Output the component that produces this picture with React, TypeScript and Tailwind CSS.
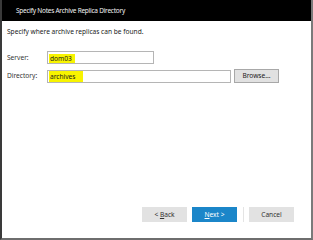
import React from "react";

const font = { fontFamily: '"Noto Sans", "Liberation Sans", sans-serif' };

const App = () => {
  return (
    <div
      className="w-[313px] h-[240px] bg-white flex flex-col border-l-2 border-l-[#3a3a3a] border-r-2 border-r-[#7a7a7a] border-b-2 border-b-[#6e6e6e] overflow-hidden"
      style={font}
    >
      <div className="h-[21px] bg-black text-[#f2f2f2] text-[6.5px] tracking-[-0.25px] leading-[21px] pl-[14px] shrink-0">
        Specify Notes Archive Replica Directory
      </div>
      <div className="flex-1 flex flex-col px-[5px] text-[6.6px] text-[#1a1a1a]">
        <div className="mt-[6px] leading-[10px]">Specify where archive replicas can be found.</div>

        <div className="flex items-center mt-[14px]">
          <span className="w-[40px] text-[#333]">Server:</span>
          <div className="w-[107px] h-[13px] border border-[#b5b5b5] flex items-center px-[1px]">
            <span className="bg-[#f8f400] pl-[1px] pr-[3px] leading-[9px] mt-[2px]">dom03</span>
          </div>
        </div>

        <div className="flex items-center mt-[5px]">
          <span className="w-[40px] text-[#333]">Directory:</span>
          <div className="w-[184px] h-[13px] border border-[#b5b5b5] flex items-center px-[1px]">
            <span className="bg-[#f8f400] pl-[1px] pr-[8px] leading-[11px]">archives</span>
          </div>
          <button className="ml-[3px] w-[45px] h-[14px] bg-[#e1e1e1] border border-[#a8a8a8] text-[6.6px] leading-[12px]">
            Browse...
          </button>
        </div>

        <div className="flex-1" />

        <div className="flex items-center mb-[16px] pl-[135px]">
          <button className="w-[45px] h-[15px] bg-[#e2e2e2] text-[6.6px] text-[#333]">
            &lt; <span className="underline">B</span>ack
          </button>
          <button className="ml-[5px] w-[45px] h-[15px] bg-[#1b86c9] text-[6.6px] text-white">
            <span className="underline">N</span>ext &gt;
          </button>
          <div className="ml-[6px] w-px h-[15px] bg-[#e4e4e4]" />
          <button className="ml-[5px] w-[45px] h-[15px] bg-[#e2e2e2] text-[6.6px] text-[#333]">
            Cancel
          </button>
        </div>
      </div>
    </div>
  );
};

export default App;
